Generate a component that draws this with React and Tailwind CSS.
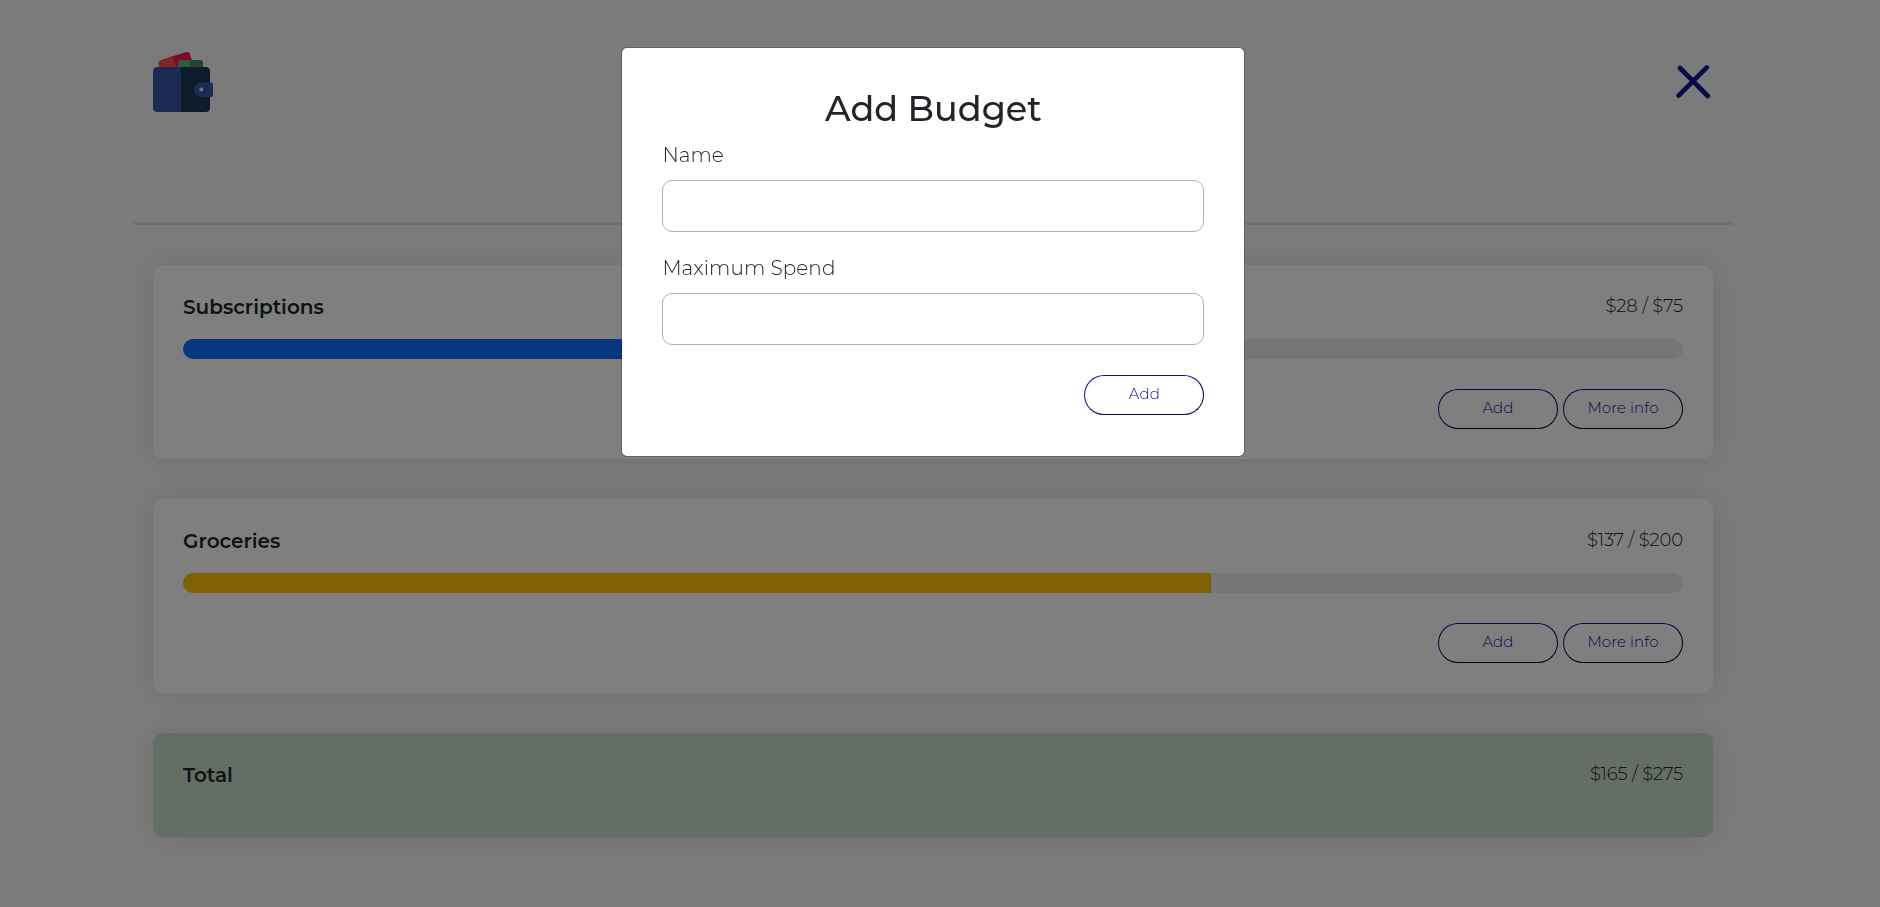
import React from "react";

const budgets = [
  { name: "Subscriptions", spent: 28, max: 75, color: "bg-[#0d6efd]" },
  { name: "Groceries", spent: 137, max: 200, color: "bg-[#ffc107]" },
];

function WalletLogo() {
  return (
    <svg width="60" height="60" viewBox="0 0 60 60">
      <path d="M5.5 12.5 Q4.5 9.5 7.5 8.3 L20 3.8 L26 15 H6.5Z" fill="#f95054" />
      <path d="M19.5 4.3 L33.5 0 Q36 -.6 36.8 1.8 L41 15 H24Z" fill="#f81356" />
      <path d="M27 8 H38 V17 H25 V10 Q25 8 27 8Z" fill="#56c17f" />
      <path d="M37 8 H48 Q50 8 50 10 V17 H37Z" fill="#458f62" />
      <path d="M4.500 15 H28.500 V60 H4.500 Q0 60 0 55.500 V19.500 Q0 15 4.500 15Z" fill="#3957a8" />
      <path d="M28 15 H52.500 Q57 15 57 19.500 V55.500 Q57 60 52.500 60 H28Z" fill="#1d3652" />
      <path d="M48.500 30.500 H58 Q60 30.500 60 32.500 V43 Q60 45 58 45 H48.500 A7.250 7.250 0 0 1 48.500 30.500Z" fill="#3957a8" />
      <circle cx="48.300" cy="37.500" r="1.900" fill="#e6eaf5" />
    </svg>
  );
}

function PillButton({ children }) {
  return (
    <button className="h-10 w-[120px] rounded-[20px] border border-t-[#12128a] border-l-[#12128a] border-r-[#05053a] border-b-[#05053a] pb-0.5 text-[15px] font-light tracking-[0.1px] text-[#0c0c90]">
      {children}
    </button>
  );
}

function CardHeader({ title, amount }) {
  return (
    <div className="flex h-6 items-center justify-between">
      <h2 className="text-[20px] font-semibold leading-6">{title}</h2>
      <span className="-mt-0.5 text-[18px] font-light leading-6 tracking-[-0.1px]">{amount}</span>
    </div>
  );
}

function BudgetCard({ name, spent, max, color }) {
  return (
    <section className="flex h-[194px] flex-col rounded-[10px] bg-white p-[30px] shadow-[0_0_30px_rgba(0,0,0,0.1)]">
      <CardHeader title={name} amount={`$${spent} / $${max}`} />
      <div className="mt-5 h-5 overflow-hidden rounded-[10px] bg-[#e9ecef]">
        <div className={`h-full ${color}`} style={{ width: `${(spent / max) * 100}%` }} />
      </div>
      <div className="mt-[30px] flex justify-end gap-[5px]">
        <PillButton>Add</PillButton>
        <PillButton>More info</PillButton>
      </div>
    </section>
  );
}

function Field({ label }) {
  return (
    <label className="flex flex-col gap-2.5 text-[20px] font-light leading-[30px] tracking-[0.08px]">
      <span>{label}</span>
      <input className="h-[52.4px] w-full rounded-[10px] border border-[#b2b2b2] px-4" />
    </label>
  );
}

export default function App() {
  return (
    <div className="h-[907px] overflow-hidden bg-[#f6f6f6] font-['Montserrat','Inter',sans-serif] text-[#212529]">
      <div className="ml-[133px] w-[1600px]">
        <header className="flex h-[222px] items-start justify-between px-5 pt-[52px]">
          <WalletLogo />
          <svg className="mt-3 mr-px" width="36" height="36" viewBox="0 0 36 36" stroke="#12128f" strokeWidth="4.700" strokeLinecap="round">
            <path d="M4 4 L31.800 32 M30.800 3.400 L2.600 31.700" />
          </svg>
        </header>
        <div className="h-[3px] border-t border-[#ebebeb] bg-[#dfdfdf]" />
        <main className="flex flex-col gap-10 px-5 pt-10">
          {budgets.map((b) => (
            <BudgetCard key={b.name} {...b} />
          ))}
          <section className="h-[104px] rounded-[10px] bg-[#c9dccb] p-[30px] shadow-[0_0_30px_rgba(0,0,0,0.1)]">
            <CardHeader title="Total" amount="$165 / $275" />
          </section>
        </main>
      </div>
      <div className="fixed inset-0 bg-black/50">
        <div className="mt-[47px] ml-[621.4px] h-[409.6px] w-[624px] rounded-[6px] border border-black/20 bg-white bg-clip-padding p-10">
          <h1 className="mt-px text-center text-[35px] font-medium leading-10">Add Budget</h1>
          <div className="mt-[11px] flex flex-col gap-[20.4px]">
            <Field label="Name" />
            <Field label="Maximum Spend" />
          </div>
          <div className="mt-[29.8px] flex justify-end">
            <PillButton>Add</PillButton>
          </div>
        </div>
      </div>
    </div>
  );
}
